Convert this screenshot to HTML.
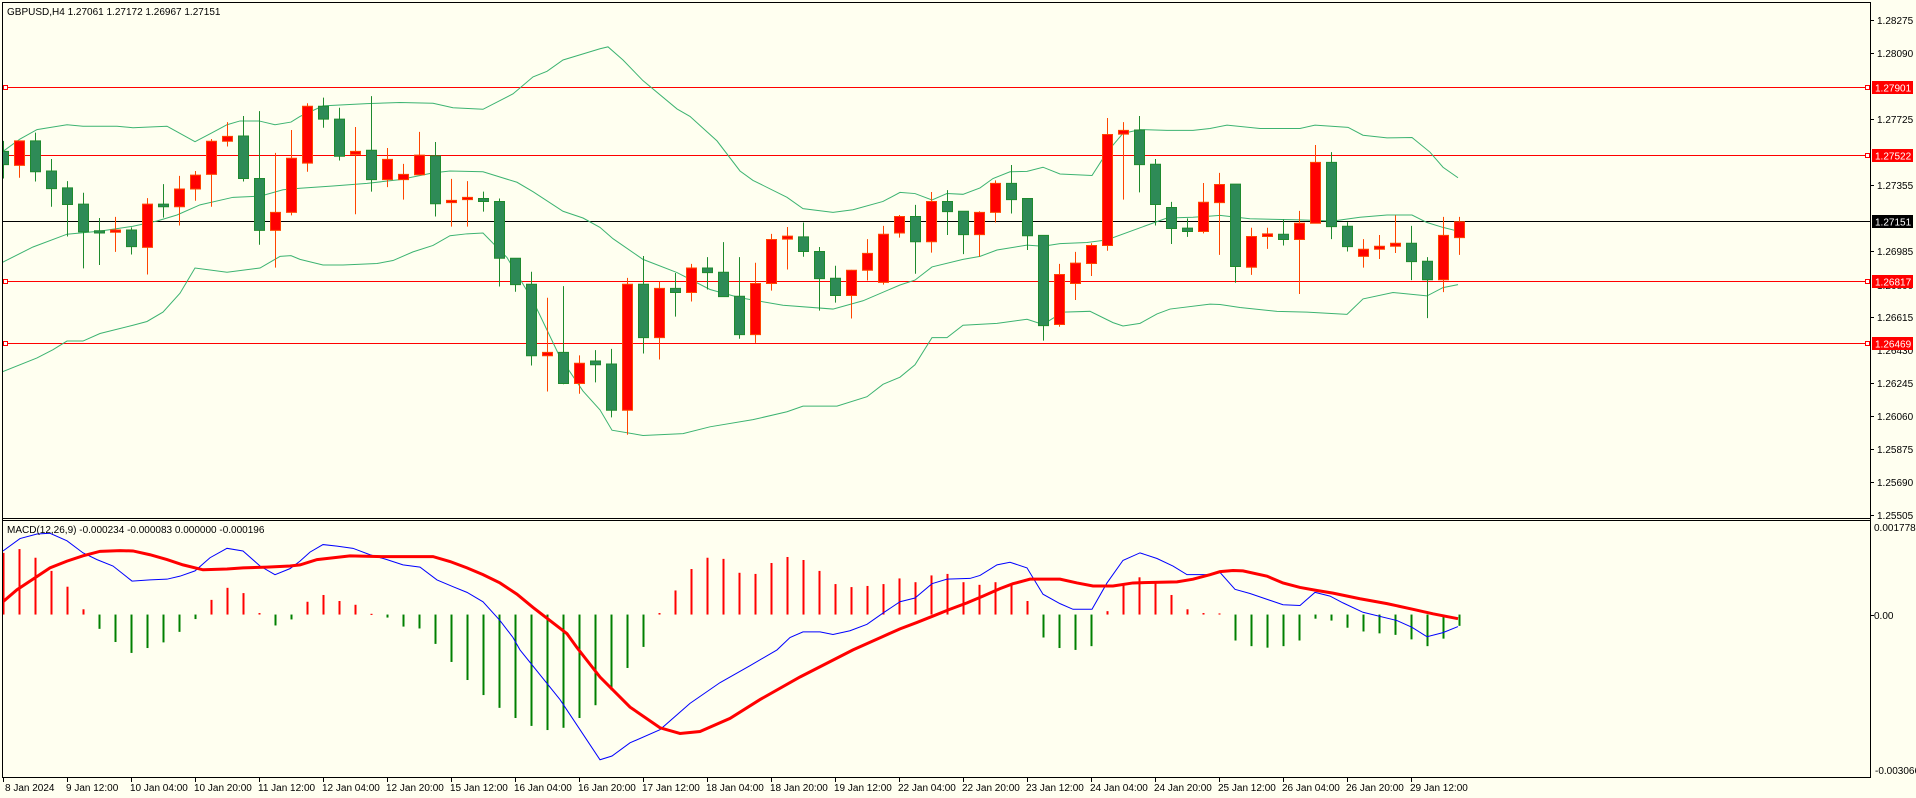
<!DOCTYPE html>
<html><head><meta charset="utf-8"><style>
html,body{margin:0;padding:0;background:#fffff0;}
svg{display:block;}
text{font-family:"Liberation Sans",sans-serif;font-size:10px;fill:#000;}
.t *{vector-effect:non-scaling-stroke;}
.rw{stroke:#ff4500;stroke-width:1;fill:none}
.gw{stroke:#1e8a2e;stroke-width:1;fill:none}
.rb{fill:#ff0000;stroke:#ff4500;stroke-width:1}
.gb{fill:#2e8b57;stroke:#1e8a2e;stroke-width:1}
.band{fill:none;stroke:#3cb371;stroke-width:1}
</style></head><body>
<svg width="1916" height="798" viewBox="0 0 1916 798" xmlns="http://www.w3.org/2000/svg">
<defs>
<clipPath id="cm"><rect x="3" y="3" width="1867" height="514"/></clipPath>
<clipPath id="cd"><rect x="3" y="521" width="1867" height="255"/></clipPath>
</defs>
<rect width="1916" height="798" fill="#fffff0"/>

<g stroke="#ff0000" stroke-width="1" fill="none">
<line x1="3" y1="87.5" x2="1868" y2="87.5"/>
<line x1="3" y1="155.5" x2="1868" y2="155.5"/>
<line x1="3" y1="281.5" x2="1868" y2="281.5"/>
<line x1="3" y1="343.5" x2="1868" y2="343.5"/>
<rect x="3.5" y="85.5" width="4" height="4" fill="#fff"/>
<rect x="3.5" y="153.5" width="4" height="4" fill="#fff"/>
<rect x="3.5" y="279.5" width="4" height="4" fill="#fff"/>
<rect x="3.5" y="341.5" width="4" height="4" fill="#fff"/>
<rect x="1865.5" y="85.5" width="4" height="4" fill="#fff"/>
<rect x="1865.5" y="153.5" width="4" height="4" fill="#fff"/>
<rect x="1865.5" y="279.5" width="4" height="4" fill="#fff"/>
<rect x="1865.5" y="341.5" width="4" height="4" fill="#fff"/>
</g>
<line x1="3" y1="221.5" x2="1870" y2="221.5" stroke="#000" stroke-width="1"/>

<g clip-path="url(#cm)">
<g class="t" transform="translate(0,60) scale(1,0.37622)">
<polyline class="band" points="3,243 20,210 37,185 67,172 83,176 117,176 133,180 167,176 195,217 211,195 227,172 240,162 259,162 275,172 291,165 300,150 323,122 367,116 400,113 433,115 453,127 483,131 513,90 533,45 547,30 563,0 600,-30 608,-35 623,0 643,55 677,130 690,150 717,215 740,295 753,320 787,365 803,395 833,405 853,398 883,376 900,352 915,355 932,372 947,355 963,357 980,340 993,315 1010,297 1027,296 1043,285 1060,303 1092,307 1107,245 1123,195 1140,185 1167,187 1193,187 1210,182 1227,173 1260,182 1300,182 1315,173 1348,179 1363,200 1387,207 1412,206 1430,245 1443,285 1458,313"/>
<polyline class="band" points="0,545 3,537 33,497 67,463 100,455 133,442 157,428 177,412 200,385 233,365 260,362 283,345 300,341 333,335 367,328 400,318 433,300 450,295 483,297 517,325 533,350 563,402 583,420 600,445 613,475 643,530 677,565 710,610 740,632 783,652 833,662 863,640 900,598 915,585 932,550 963,530 980,522 997,505 1027,492 1043,495 1060,488 1087,485 1107,478 1140,446 1167,420 1193,418 1210,415 1220,413 1250,422 1300,425 1333,428 1360,418 1387,412 1412,412 1427,432 1443,445 1458,455"/>
<polyline class="band" points="0,832 3,828 37,792 53,770 67,747 83,747 100,727 133,705 147,695 163,670 180,620 195,553 227,564 260,553 280,522 291,520 300,530 323,545 343,545 377,541 393,533 413,510 433,493 450,467 467,462 483,460 507,525 533,640 560,790 583,880 600,930 612,984 643,998 683,993 710,975 753,956 787,935 803,920 837,920 867,895 883,862 900,843 915,810 932,738 947,738 963,705 997,700 1027,689 1043,703 1063,670 1090,668 1113,698 1123,707 1140,700 1157,675 1170,662 1210,649 1220,650 1240,658 1277,668 1307,670 1327,673 1347,676 1363,635 1393,618 1427,627 1443,605 1458,597"/>

<path class="gw" d="M3.5 215V315M35.5 193V323M51.5 263V390M67.5 322V469M83.5 353V554M99.5 420V545M131.5 445V517M163.5 330V419M243.5 149V323M259.5 136V491M323.5 100V180M339.5 127V267M371.5 96V350M435.5 218V416M483.5 350V403M499.5 368V602M515.5 527V616M531.5 563V812M563.5 601V862M595.5 771V857M611.5 768V950M643.5 521V780M675.5 566V682M707.5 524V610M723.5 484V629M739.5 524V741M803.5 432V523M819.5 497V666M835.5 547V645M915.5 385V568M947.5 346V465M963.5 402V516M1011.5 279V408M1027.5 368V505M1043.5 466V746M1139.5 149V352M1155.5 263V440M1171.5 377V489M1187.5 421V470M1235.5 330V592M1283.5 424V493M1331.5 245V476M1347.5 431V509M1411.5 441V585M1427.5 524V686"/>
<path class="rw" d="M19.5 215V313M115.5 417V510M147.5 367V570M179.5 308V440M195.5 295V374M211.5 210V390M227.5 165V230M275.5 247V552M291.5 186V413M307.5 115V297M355.5 178V410M387.5 234V338M403.5 276V371M419.5 191V305M451.5 316V443M467.5 322V443M547.5 632V881M579.5 785V887M627.5 579V996M659.5 589V796M691.5 542V642M755.5 539V752M771.5 462V613M787.5 444V557M851.5 558V687M867.5 476V586M883.5 441V597M899.5 412V472M931.5 351V512M979.5 402V523M995.5 320V432M1059.5 542V709M1075.5 510V638M1091.5 487V574M1107.5 154V507M1123.5 165V371M1203.5 327V461M1219.5 300V518M1251.5 446V571M1267.5 446V502M1299.5 401V622M1315.5 226V434M1363.5 476V552M1379.5 465V529M1395.5 413V513M1443.5 417V617M1459.5 417V518"/>

<rect class="gb" x="-1.5" y="243" width="10" height="35"/>
<rect class="rb" x="14.5" y="215" width="10" height="65"/>
<rect class="gb" x="30.5" y="215" width="10" height="82"/>
<rect class="gb" x="46.5" y="295" width="10" height="47"/>
<rect class="gb" x="62.5" y="340" width="10" height="44"/>
<rect class="gb" x="78.5" y="383" width="10" height="74"/>
<rect class="gb" x="94.5" y="454" width="10" height="6"/>
<rect class="rb" x="110.5" y="452" width="10" height="6"/>
<rect class="gb" x="126.5" y="452" width="10" height="44"/>
<rect class="rb" x="142.5" y="383" width="10" height="115"/>
<rect class="gb" x="158.5" y="383" width="10" height="7"/>
<rect class="rb" x="174.5" y="343" width="10" height="47"/>
<rect class="rb" x="190.5" y="306" width="10" height="37"/>
<rect class="rb" x="206.5" y="216" width="10" height="88"/>
<rect class="rb" x="222.5" y="203" width="10" height="13"/>
<rect class="gb" x="238.5" y="202" width="10" height="113"/>
<rect class="gb" x="254.5" y="315" width="10" height="138"/>
<rect class="rb" x="270.5" y="405" width="10" height="48"/>
<rect class="rb" x="286.5" y="261" width="10" height="144"/>
<rect class="rb" x="302.5" y="123" width="10" height="151"/>
<rect class="gb" x="318.5" y="123" width="10" height="34"/>
<rect class="gb" x="334.5" y="157" width="10" height="99"/>
<rect class="rb" x="350.5" y="243" width="10" height="8"/>
<rect class="gb" x="366.5" y="240" width="10" height="78"/>
<rect class="rb" x="382.5" y="264" width="10" height="54"/>
<rect class="rb" x="398.5" y="304" width="10" height="14"/>
<rect class="rb" x="414.5" y="253" width="10" height="52"/>
<rect class="gb" x="430.5" y="255" width="10" height="127"/>
<rect class="rb" x="446.5" y="373" width="10" height="6"/>
<rect class="rb" x="462.5" y="365" width="10" height="6"/>
<rect class="gb" x="478.5" y="368" width="10" height="8"/>
<rect class="gb" x="494.5" y="376" width="10" height="151"/>
<rect class="gb" x="510.5" y="527" width="10" height="70"/>
<rect class="gb" x="526.5" y="596" width="10" height="190"/>
<rect class="rb" x="542.5" y="777" width="10" height="9"/>
<rect class="gb" x="558.5" y="777" width="10" height="83"/>
<rect class="rb" x="574.5" y="806" width="10" height="54"/>
<rect class="gb" x="590.5" y="800" width="10" height="10"/>
<rect class="gb" x="606.5" y="808" width="10" height="123"/>
<rect class="rb" x="622.5" y="596" width="10" height="335"/>
<rect class="gb" x="638.5" y="596" width="10" height="142"/>
<rect class="rb" x="654.5" y="607" width="10" height="131"/>
<rect class="gb" x="670.5" y="607" width="10" height="11"/>
<rect class="rb" x="686.5" y="553" width="10" height="65"/>
<rect class="gb" x="702.5" y="553" width="10" height="12"/>
<rect class="gb" x="718.5" y="564" width="10" height="65"/>
<rect class="gb" x="734.5" y="628" width="10" height="102"/>
<rect class="rb" x="750.5" y="594" width="10" height="136"/>
<rect class="rb" x="766.5" y="477" width="10" height="117"/>
<rect class="rb" x="782.5" y="468" width="10" height="8"/>
<rect class="gb" x="798.5" y="470" width="10" height="39"/>
<rect class="gb" x="814.5" y="509" width="10" height="72"/>
<rect class="gb" x="830.5" y="580" width="10" height="46"/>
<rect class="rb" x="846.5" y="559" width="10" height="67"/>
<rect class="rb" x="862.5" y="514" width="10" height="45"/>
<rect class="rb" x="878.5" y="463" width="10" height="128"/>
<rect class="rb" x="894.5" y="416" width="10" height="44"/>
<rect class="gb" x="910.5" y="416" width="10" height="67"/>
<rect class="rb" x="926.5" y="376" width="10" height="107"/>
<rect class="gb" x="942.5" y="376" width="10" height="27"/>
<rect class="gb" x="958.5" y="402" width="10" height="62"/>
<rect class="rb" x="974.5" y="405" width="10" height="59"/>
<rect class="rb" x="990.5" y="328" width="10" height="77"/>
<rect class="gb" x="1006.5" y="328" width="10" height="43"/>
<rect class="gb" x="1022.5" y="368" width="10" height="99"/>
<rect class="gb" x="1038.5" y="466" width="10" height="240"/>
<rect class="rb" x="1054.5" y="570" width="10" height="133"/>
<rect class="rb" x="1070.5" y="540" width="10" height="54"/>
<rect class="rb" x="1086.5" y="493" width="10" height="48"/>
<rect class="rb" x="1102.5" y="198" width="10" height="295"/>
<rect class="rb" x="1118.5" y="187" width="10" height="10"/>
<rect class="gb" x="1134.5" y="186" width="10" height="92"/>
<rect class="gb" x="1150.5" y="277" width="10" height="107"/>
<rect class="gb" x="1166.5" y="392" width="10" height="56"/>
<rect class="gb" x="1182.5" y="447" width="10" height="9"/>
<rect class="rb" x="1198.5" y="378" width="10" height="78"/>
<rect class="rb" x="1214.5" y="331" width="10" height="48"/>
<rect class="gb" x="1230.5" y="330" width="10" height="219"/>
<rect class="rb" x="1246.5" y="469" width="10" height="82"/>
<rect class="rb" x="1262.5" y="462" width="10" height="7"/>
<rect class="gb" x="1278.5" y="463" width="10" height="14"/>
<rect class="rb" x="1294.5" y="434" width="10" height="43"/>
<rect class="rb" x="1310.5" y="272" width="10" height="162"/>
<rect class="gb" x="1326.5" y="272" width="10" height="171"/>
<rect class="gb" x="1342.5" y="442" width="10" height="54"/>
<rect class="rb" x="1358.5" y="503" width="10" height="19"/>
<rect class="rb" x="1374.5" y="495" width="10" height="8"/>
<rect class="rb" x="1390.5" y="487" width="10" height="8"/>
<rect class="gb" x="1406.5" y="487" width="10" height="49"/>
<rect class="gb" x="1422.5" y="535" width="10" height="49"/>
<rect class="rb" x="1438.5" y="466" width="10" height="118"/>
<rect class="rb" x="1454.5" y="430" width="10" height="42"/>
</g>
</g>

<g clip-path="url(#cd)">
<g class="t" transform="translate(0,60) scale(1,0.37622)">
<g fill="#ff0000">
<rect x="2.5" y="1310" width="2" height="164"/><rect x="18.5" y="1300" width="2" height="174"/><rect x="34.5" y="1323" width="2" height="151"/><rect x="50.5" y="1358" width="2" height="116"/><rect x="66.5" y="1400" width="2" height="74"/><rect x="82.5" y="1460" width="2" height="14"/>
<rect x="210.5" y="1435" width="2" height="39"/><rect x="226.5" y="1403" width="2" height="71"/><rect x="242.5" y="1417" width="2" height="57"/><rect x="258.5" y="1470" width="2" height="4"/>
<rect x="306.5" y="1440" width="2" height="34"/><rect x="322.5" y="1422" width="2" height="52"/><rect x="338.5" y="1438" width="2" height="36"/><rect x="354.5" y="1448" width="2" height="26"/><rect x="370.5" y="1472" width="2" height="3"/>
<rect x="658.5" y="1470" width="2" height="4"/><rect x="674.5" y="1410" width="2" height="64"/><rect x="690.5" y="1353" width="2" height="121"/><rect x="706.5" y="1323" width="2" height="151"/><rect x="722.5" y="1326" width="2" height="148"/><rect x="738.5" y="1363" width="2" height="111"/><rect x="754.5" y="1366" width="2" height="108"/><rect x="770.5" y="1337" width="2" height="137"/><rect x="786.5" y="1321" width="2" height="153"/><rect x="802.5" y="1329" width="2" height="145"/><rect x="818.5" y="1358" width="2" height="116"/><rect x="834.5" y="1393" width="2" height="81"/><rect x="850.5" y="1401" width="2" height="73"/><rect x="866.5" y="1398" width="2" height="76"/><rect x="882.5" y="1393" width="2" height="81"/><rect x="898.5" y="1378" width="2" height="96"/><rect x="914.5" y="1388" width="2" height="86"/><rect x="930.5" y="1370" width="2" height="104"/><rect x="946.5" y="1366" width="2" height="108"/><rect x="962.5" y="1388" width="2" height="86"/><rect x="978.5" y="1395" width="2" height="79"/><rect x="994.5" y="1388" width="2" height="86"/><rect x="1010.5" y="1395" width="2" height="79"/><rect x="1026.5" y="1438" width="2" height="36"/>
<rect x="1106.5" y="1465" width="2" height="9"/><rect x="1122.5" y="1395" width="2" height="79"/><rect x="1138.5" y="1375" width="2" height="99"/><rect x="1154.5" y="1388" width="2" height="86"/><rect x="1170.5" y="1422" width="2" height="52"/><rect x="1186.5" y="1460" width="2" height="14"/><rect x="1202.5" y="1470" width="2" height="4"/><rect x="1218.5" y="1471" width="2" height="3"/>
</g>
<g fill="#008000">
<rect x="98.5" y="1474" width="2" height="38"/><rect x="114.5" y="1474" width="2" height="73"/><rect x="130.5" y="1474" width="2" height="102"/><rect x="146.5" y="1474" width="2" height="89"/><rect x="162.5" y="1474" width="2" height="74"/><rect x="178.5" y="1474" width="2" height="46"/><rect x="194.5" y="1474" width="2" height="12"/>
<rect x="274.5" y="1474" width="2" height="29"/><rect x="290.5" y="1474" width="2" height="13"/>
<rect x="386.5" y="1474" width="2" height="8"/><rect x="402.5" y="1474" width="2" height="32"/><rect x="418.5" y="1474" width="2" height="37"/><rect x="434.5" y="1474" width="2" height="78"/><rect x="450.5" y="1474" width="2" height="126"/><rect x="466.5" y="1474" width="2" height="174"/><rect x="482.5" y="1474" width="2" height="214"/><rect x="498.5" y="1474" width="2" height="248"/><rect x="514.5" y="1474" width="2" height="275"/><rect x="530.5" y="1474" width="2" height="296"/><rect x="546.5" y="1474" width="2" height="307"/><rect x="562.5" y="1474" width="2" height="301"/><rect x="578.5" y="1474" width="2" height="275"/><rect x="594.5" y="1474" width="2" height="241"/><rect x="610.5" y="1474" width="2" height="201"/><rect x="626.5" y="1474" width="2" height="142"/><rect x="642.5" y="1474" width="2" height="86"/>
<rect x="1042.5" y="1474" width="2" height="61"/><rect x="1058.5" y="1474" width="2" height="89"/><rect x="1074.5" y="1474" width="2" height="94"/><rect x="1090.5" y="1474" width="2" height="84"/>
<rect x="1234.5" y="1474" width="2" height="69"/><rect x="1250.5" y="1474" width="2" height="84"/><rect x="1266.5" y="1474" width="2" height="88"/><rect x="1282.5" y="1474" width="2" height="84"/><rect x="1298.5" y="1474" width="2" height="69"/><rect x="1314.5" y="1474" width="2" height="11"/><rect x="1330.5" y="1474" width="2" height="16"/><rect x="1346.5" y="1474" width="2" height="35"/><rect x="1362.5" y="1474" width="2" height="45"/><rect x="1378.5" y="1474" width="2" height="50"/><rect x="1394.5" y="1474" width="2" height="54"/><rect x="1410.5" y="1474" width="2" height="66"/><rect x="1426.5" y="1474" width="2" height="84"/><rect x="1442.5" y="1474" width="2" height="64"/><rect x="1458.5" y="1474" width="2" height="30"/>
</g>
<polyline fill="none" stroke="#0000ff" stroke-width="1" points="3,1305 20,1272 37,1260 50,1258 67,1278 83,1310 97,1328 113,1345 132,1385 150,1382 167,1380 180,1372 195,1358 210,1323 227,1298 243,1305 260,1345 275,1368 290,1352 300,1332 310,1308 323,1288 337,1292 353,1298 370,1315 387,1328 403,1342 420,1348 437,1382 453,1400 467,1415 483,1440 500,1490 513,1535 520,1568 560,1700 585,1800 600,1860 612,1850 630,1815 660,1780 690,1710 720,1655 750,1610 777,1568 790,1535 803,1520 820,1520 833,1527 850,1517 867,1500 883,1470 900,1440 915,1430 932,1392 947,1380 970,1378 980,1370 997,1342 1010,1335 1027,1350 1043,1420 1060,1445 1073,1460 1092,1460 1107,1390 1123,1330 1140,1310 1157,1325 1173,1345 1187,1368 1210,1368 1220,1362 1235,1407 1250,1418 1283,1448 1300,1450 1315,1415 1330,1425 1343,1443 1363,1468 1397,1490 1412,1508 1427,1533 1443,1522 1458,1506"/>
<polyline fill="none" stroke="#ff0000" stroke-width="3" points="3,1440 17,1408 33,1380 50,1350 67,1332 83,1318 100,1306 120,1304 133,1305 150,1315 167,1328 183,1342 203,1355 227,1353 243,1350 267,1348 290,1345 300,1342 317,1328 350,1318 383,1320 433,1320 450,1333 467,1350 483,1368 500,1390 517,1420 533,1455 550,1490 567,1525 577,1562 600,1640 630,1720 660,1775 680,1790 700,1785 730,1750 760,1700 800,1640 853,1568 900,1512 917,1495 933,1478 950,1460 967,1443 983,1425 1000,1405 1013,1392 1030,1380 1060,1380 1077,1390 1093,1398 1113,1398 1133,1390 1160,1388 1177,1387 1193,1380 1210,1368 1220,1360 1233,1357 1243,1358 1267,1372 1283,1390 1300,1402 1317,1410 1333,1417 1360,1432 1387,1445 1413,1460 1433,1472 1458,1485"/>
</g>
</g>

<g stroke="#000" stroke-width="1" fill="none">
<line x1="2.5" y1="2" x2="2.5" y2="778"/>
<line x1="2" y1="2.5" x2="1871" y2="2.5"/>
<line x1="1870.5" y1="2" x2="1870.5" y2="778"/>
<line x1="2" y1="518.5" x2="1871" y2="518.5"/>
<line x1="2" y1="520.5" x2="1871" y2="520.5"/>
<line x1="2" y1="777.5" x2="1871" y2="777.5"/>
</g>
<g stroke="#000" stroke-width="1">
<line x1="1870" y1="20.5" x2="1874" y2="20.5"/><line x1="1870" y1="53.5" x2="1874" y2="53.5"/><line x1="1870" y1="119.5" x2="1874" y2="119.5"/><line x1="1870" y1="185.5" x2="1874" y2="185.5"/><line x1="1870" y1="251.5" x2="1874" y2="251.5"/><line x1="1870" y1="317.5" x2="1874" y2="317.5"/><line x1="1870" y1="383.5" x2="1874" y2="383.5"/><line x1="1870" y1="416.5" x2="1874" y2="416.5"/><line x1="1870" y1="449.5" x2="1874" y2="449.5"/><line x1="1870" y1="482.5" x2="1874" y2="482.5"/><line x1="1870" y1="515.5" x2="1874" y2="515.5"/><line x1="1870" y1="615.5" x2="1874" y2="615.5"/>
</g>
<g>
<text x="1877" y="24">1.28275</text>
<text x="1877" y="57">1.28090</text>
<text x="1877" y="123">1.27725</text>
<text x="1877" y="189">1.27355</text>
<text x="1877" y="255">1.26985</text>
<text x="1877" y="289">1.26800</text>
<text x="1877" y="321">1.26615</text>
<text x="1877" y="354">1.26430</text>
<text x="1877" y="387">1.26245</text>
<text x="1877" y="420">1.26060</text>
<text x="1877" y="453">1.25875</text>
<text x="1877" y="486">1.25690</text>
<text x="1877" y="519">1.25505</text>
<text x="1874" y="531">0.001778</text>
<text x="1874" y="619">0.00</text>
<text x="1875" y="774">-0.003066</text>
</g>
<g>
<rect x="1872" y="81" width="41" height="13" fill="#ff0000"/><text x="1875" y="91.5" style="fill:#fff">1.27901</text>
<rect x="1872" y="149" width="41" height="13" fill="#ff0000"/><text x="1875" y="159.5" style="fill:#fff">1.27522</text>
<rect x="1872" y="215" width="41" height="13" fill="#000"/><text x="1875" y="225.5" style="fill:#fff">1.27151</text>
<rect x="1872" y="275" width="41" height="13" fill="#ff0000"/><text x="1875" y="285.5" style="fill:#fff">1.26817</text>
<rect x="1872" y="337" width="41" height="13" fill="#ff0000"/><text x="1875" y="347.5" style="fill:#fff">1.26469</text>
</g>

<text x="7" y="15">GBPUSD,H4  1.27061 1.27172 1.26967 1.27151</text>
<text x="7" y="533">MACD(12,26,9) -0.000234 -0.000083 0.000000 -0.000196</text>

<g stroke="#000" stroke-width="1">
<line x1="3.5" y1="778" x2="3.5" y2="782"/><line x1="67.5" y1="778" x2="67.5" y2="782"/><line x1="131.5" y1="778" x2="131.5" y2="782"/><line x1="195.5" y1="778" x2="195.5" y2="782"/><line x1="259.5" y1="778" x2="259.5" y2="782"/><line x1="323.5" y1="778" x2="323.5" y2="782"/><line x1="387.5" y1="778" x2="387.5" y2="782"/><line x1="451.5" y1="778" x2="451.5" y2="782"/><line x1="515.5" y1="778" x2="515.5" y2="782"/><line x1="579.5" y1="778" x2="579.5" y2="782"/><line x1="643.5" y1="778" x2="643.5" y2="782"/><line x1="707.5" y1="778" x2="707.5" y2="782"/><line x1="771.5" y1="778" x2="771.5" y2="782"/><line x1="835.5" y1="778" x2="835.5" y2="782"/><line x1="899.5" y1="778" x2="899.5" y2="782"/><line x1="963.5" y1="778" x2="963.5" y2="782"/><line x1="1027.5" y1="778" x2="1027.5" y2="782"/><line x1="1091.5" y1="778" x2="1091.5" y2="782"/><line x1="1155.5" y1="778" x2="1155.5" y2="782"/><line x1="1219.5" y1="778" x2="1219.5" y2="782"/><line x1="1283.5" y1="778" x2="1283.5" y2="782"/><line x1="1347.5" y1="778" x2="1347.5" y2="782"/><line x1="1411.5" y1="778" x2="1411.5" y2="782"/>
</g>
<g>
<text x="5" y="791">8 Jan 2024</text>
<text x="66" y="791">9 Jan 12:00</text>
<text x="130" y="791">10 Jan 04:00</text>
<text x="194" y="791">10 Jan 20:00</text>
<text x="258" y="791">11 Jan 12:00</text>
<text x="322" y="791">12 Jan 04:00</text>
<text x="386" y="791">12 Jan 20:00</text>
<text x="450" y="791">15 Jan 12:00</text>
<text x="514" y="791">16 Jan 04:00</text>
<text x="578" y="791">16 Jan 20:00</text>
<text x="642" y="791">17 Jan 12:00</text>
<text x="706" y="791">18 Jan 04:00</text>
<text x="770" y="791">18 Jan 20:00</text>
<text x="834" y="791">19 Jan 12:00</text>
<text x="898" y="791">22 Jan 04:00</text>
<text x="962" y="791">22 Jan 20:00</text>
<text x="1026" y="791">23 Jan 12:00</text>
<text x="1090" y="791">24 Jan 04:00</text>
<text x="1154" y="791">24 Jan 20:00</text>
<text x="1218" y="791">25 Jan 12:00</text>
<text x="1282" y="791">26 Jan 04:00</text>
<text x="1346" y="791">26 Jan 20:00</text>
<text x="1410" y="791">29 Jan 12:00</text>
</g>
</svg>
</body></html>
